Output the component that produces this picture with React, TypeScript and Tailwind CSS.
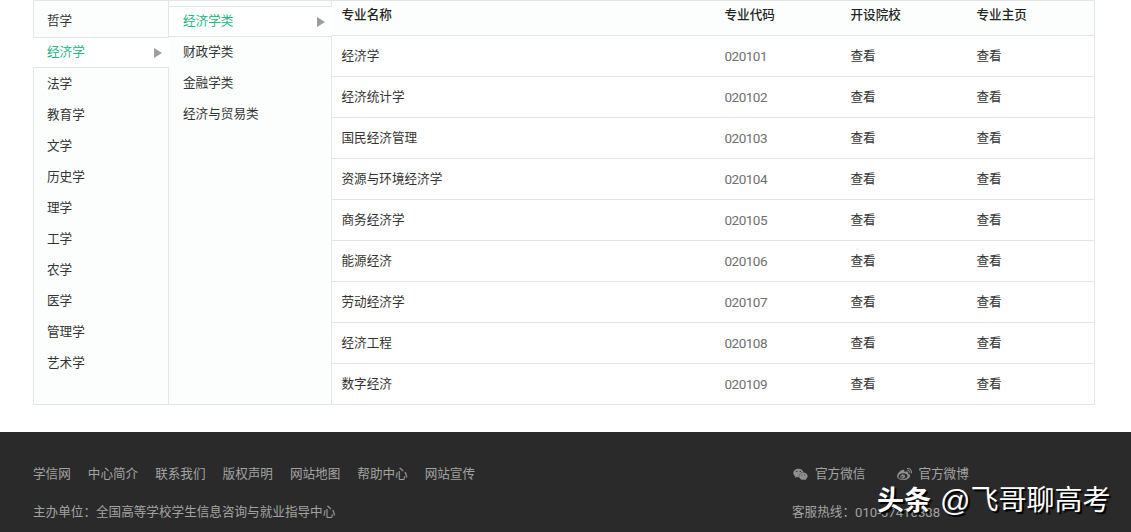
import React from 'react';
import { FaWeibo, FaWeixin } from 'react-icons/fa';

const font = "font-['Roboto','Noto_Sans_CJK_SC',sans-serif]";

const categories = ['法学', '教育学', '文学', '历史学', '理学', '工学', '农学', '医学', '管理学', '艺术学'];
const subCategories = ['财政学类', '金融学类', '经济与贸易类'];
const majors = [
  ['经济学', '020101'],
  ['经济统计学', '020102'],
  ['国民经济管理', '020103'],
  ['资源与环境经济学', '020104'],
  ['商务经济学', '020105'],
  ['能源经济', '020106'],
  ['劳动经济学', '020107'],
  ['经济工程', '020108'],
  ['数字经济', '020109'],
];
const links = ['学信网', '中心简介', '联系我们', '版权声明', '网站地图', '帮助中心', '网站宣传'];

const Arrow = () => (
  <span className="h-0 w-0 border-y-[5px] border-l-[8px] border-y-transparent border-l-[#9a9ea3]" />
);

const row = 'grid grid-cols-[383px_126px_126px_126px]';

export default function App() {
  return (
    <div className={`${font} h-[532px] w-[1131px] overflow-hidden bg-white text-[12.6px] text-[#333]`}>
      <div className="ml-[33px] flex h-[405px] w-[1062px] border border-l-0 border-[#e3e6e9]">
        {/* first level */}
        <div className="w-[136px] shrink-0">
          <div className="flex h-[37px] items-center border-b border-l border-r border-[#e3e6e9] bg-[#fbfefd] pl-[13px] pt-[5px]">
            哲学
          </div>
          <div className="flex h-[29px] items-center justify-between bg-white pl-[14px] pr-[7px] text-[#21b77f]">
            经济学
            <Arrow />
          </div>
          <div className="h-[337px] border border-b-0 border-[#e3e6e9] bg-[#fbfefd] pl-[13px] pt-px">
            {categories.map((c) => (
              <div key={c} className="flex h-[31px] items-center">
                {c}
              </div>
            ))}
          </div>
        </div>
        {/* second level */}
        <div className="w-[163px] shrink-0">
          <div className="h-[6px] border-r border-b border-[#e3e6e9] bg-[#fbfefd]" />
          <div className="flex h-[29px] items-center justify-between bg-white pl-[14px] pr-[7px] text-[#21b77f]">
            经济学类
            <Arrow />
          </div>
          <div className="h-[368px] border-t border-r border-[#e3e6e9] bg-[#fbfefd] pl-[14px]">
            {subCategories.map((c) => (
              <div key={c} className="flex h-[31px] items-center">
                {c}
              </div>
            ))}
          </div>
        </div>
        {/* majors */}
        <div className="flex-1">
          <div className={`${row} h-[35px] border-b border-[#e3e6e9] bg-[#fbfefd] pt-[5px] font-medium text-[#222]`}>
            <div className="pl-[9.5px]">专业名称</div>
            <div className="pl-[9.5px]">专业代码</div>
            <div className="pl-[9.5px]">开设院校</div>
            <div className="pl-[9.5px]">专业主页</div>
          </div>
          {majors.map(([name, code], i) => (
            <div
              key={code}
              className={`${row} h-[41px] items-center ${i < majors.length - 1 ? 'border-b border-[#e3e6e9]' : ''}`}
            >
              <div className="pl-[9.5px]">{name}</div>
              <div className="pl-[9.5px] text-[13.5px] tracking-[-0.5px] text-[#707070]">{code}</div>
              <div className="pl-[9.5px]">查看</div>
              <div className="pl-[9.5px]">查看</div>
            </div>
          ))}
        </div>
      </div>

      <footer className="relative mt-[27px] flex h-[100px] justify-between whitespace-nowrap bg-[#2a2a2a] pl-[33px] pr-[162px] text-[#a3a3a3]">
        <div>
          <div className="mt-[33px] flex h-[19px] items-center gap-[17px]">
            {links.map((l) => (
              <span key={l}>{l}</span>
            ))}
          </div>
          <div className="mt-[19px] flex h-[19px] items-center">主办单位：全国高等学校学生信息咨询与就业指导中心</div>
        </div>
        <div className="w-[177px]">
          <div className="mt-[33px] flex h-[19px] items-center">
            <FaWeixin className="ml-px text-[15px] text-[#8f8f8f]" />
            <span className="ml-[7px]">官方微信</span>
            <FaWeibo className="ml-[32px] text-[15px] text-[#8f8f8f]" />
            <span className="ml-[6px]">官方微博</span>
          </div>
          <div className="mt-[19px] flex h-[19px] items-center">
            客服热线：<span className="text-[13.2px]">010-67410388</span>
          </div>
        </div>
        <div className="absolute left-[877px] top-[51px] flex items-center text-[28px] leading-[36px] text-white [text-shadow:2px_2px_1px_#000]">
          <span className="text-[27px] font-bold">头条</span>
          <span className="ml-[9px] font-['Liberation_Sans'] text-[30px]">@</span>
          <span>飞哥聊高考</span>
        </div>
      </footer>
    </div>
  );
}
